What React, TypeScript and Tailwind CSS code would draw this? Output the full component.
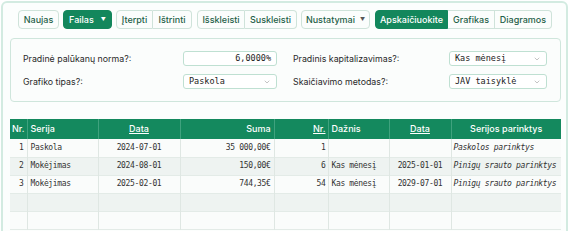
import { ChevronDown } from 'lucide-react'

const mono = { fontFamily: '"DejaVu Sans Mono", monospace' }

type Row = {
  nr: string
  serija: string
  data: string
  suma: string
  kiekis: string
  daznis: string
  data2: string
  parinktys: string
}

const rows: Row[] = [
  { nr: '1', serija: 'Paskola', data: '2024-07-01', suma: '35 000,00€', kiekis: '1', daznis: '', data2: '', parinktys: 'Paskolos parinktys' },
  { nr: '2', serija: 'Mokėjimas', data: '2024-08-01', suma: '150,00€', kiekis: '6', daznis: 'Kas mėnesį', data2: '2025-01-01', parinktys: 'Pinigų srauto parinktys' },
  { nr: '3', serija: 'Mokėjimas', data: '2025-02-01', suma: '744,35€', kiekis: '54', daznis: 'Kas mėnesį', data2: '2029-07-01', parinktys: 'Pinigų srauto parinktys' },
  { nr: '', serija: '', data: '', suma: '', kiekis: '', daznis: '', data2: '', parinktys: '' },
  { nr: '', serija: '', data: '', suma: '', kiekis: '', daznis: '', data2: '', parinktys: '' },
]

function Btn({ children, green, className = '' }: { children: React.ReactNode; green?: boolean; className?: string }) {
  return (
    <div
      className={`h-[19px] flex items-center justify-center text-[9px] font-medium whitespace-nowrap ${
        green ? 'bg-[#13875c] text-white border border-[#13875c]' : 'bg-[#fbfdfc] text-[#1f5f48] border border-[#cfe3da]'
      } ${className}`}
    >
      {children}
    </div>
  )
}

function Field({ value, select, width, right }: { value: string; select?: boolean; width: string; right?: boolean }) {
  return (
    <div
      className={`${width} h-[15px] rounded-[3px] border border-[#bfe0d2] bg-white flex items-center px-[5px] text-[8.5px] text-[#222] ${right ? 'justify-end' : 'justify-between'}`}
      style={mono}
    >
      <span>{value}</span>
      {select && <ChevronDown size={8} className="text-[#888]" strokeWidth={1.5} />}
    </div>
  )
}

export default function App() {
  return (
    <div className="w-[570px] h-[231px] overflow-hidden bg-white" style={{ fontFamily: 'Inter, "Noto Sans", sans-serif' }}>
      <div className="ml-[1px] mt-[1px] w-[567px] h-[240px] rounded-tl-[6px] rounded-tr-[6px] border-[2px] border-[#d3ebe1] bg-[#fcfefd] pt-[7px] pl-[7px]">
        {/* Toolbar */}
        <div className="flex items-center pl-[8px]">
          <Btn className="w-[41px] rounded-[4px]">Naujas</Btn>
          <Btn green className="w-[49px] ml-[4px] rounded-[4px] gap-[7px]">
            Failas <span className="text-[5px]">▼</span>
          </Btn>
          <div className="flex ml-[4px]">
            <Btn className="w-[37px] rounded-l-[4px]">Įterpti</Btn>
            <Btn className="w-[39px] rounded-r-[4px] border-l-0">Ištrinti</Btn>
          </div>
          <div className="flex ml-[5px]">
            <Btn className="w-[48px] rounded-l-[4px]">Išskleisti</Btn>
            <Btn className="w-[52px] rounded-r-[4px] border-l-0">Suskleisti</Btn>
          </div>
          <Btn className="w-[69px] ml-[4px] rounded-[4px] gap-[5px]">
            Nustatymai <span className="text-[5px] text-[#555]">▼</span>
          </Btn>
          <div className="flex ml-[5px]">
            <Btn green className="w-[73px] rounded-l-[4px]">Apskaičiuokite</Btn>
            <Btn className="w-[47px] border-l-0">Grafikas</Btn>
            <Btn className="w-[57px] rounded-r-[4px] border-l-0">Diagramos</Btn>
          </div>
        </div>

        {/* Form panel */}
        <div className="mt-[9px] w-[551px] h-[64px] rounded-[4px] border border-[#cfe6dc] bg-[#fbfdfc] pt-[12px] pl-[12px] text-[8.8px] text-[#2a2a2a]">
          <div className="grid grid-cols-[160px_94px_16px_156px_98px] gap-y-[8px] items-center">
            <span>Pradinė palūkanų norma?:</span>
            <Field value="6,0000%" width="w-[94px]" right />
            <span />
            <span>Pradinis kapitalizavimas?:</span>
            <Field value="Kas mėnesį" width="w-[98px]" select />
            <span>Grafiko tipas?:</span>
            <Field value="Paskola" width="w-[94px]" select />
            <span />
            <span>Skaičiavimo metodas?:</span>
            <Field value="JAV taisyklė" width="w-[98px]" select />
          </div>
        </div>

        {/* Table */}
        <table className="mt-[17px] w-[551px] border-collapse table-fixed">
          <colgroup>
            <col className="w-[17px]" />
            <col className="w-[71px]" />
            <col className="w-[82px]" />
            <col className="w-[94px]" />
            <col className="w-[54px]" />
            <col className="w-[61px]" />
            <col className="w-[62px]" />
            <col className="w-[110px]" />
          </colgroup>
          <thead>
            <tr className="h-[20px] bg-[#14895e] text-white text-[9px]">
              <th className="px-[2px] text-left font-medium border-r border-[#3fa27e]">Nr.</th>
              <th className="px-[3px] text-left font-medium border-r border-[#3fa27e]">Serija</th>
              <th className="text-center font-medium border-r border-[#3fa27e] underline">Data</th>
              <th className="px-[3px] text-right font-medium border-r border-[#3fa27e]">Suma</th>
              <th className="px-[2px] text-right font-medium border-r border-[#3fa27e] underline">Nr.</th>
              <th className="px-[3px] text-left font-medium border-r border-[#3fa27e]">Dažnis</th>
              <th className="text-center font-medium border-r border-[#3fa27e] underline">Data</th>
              <th className="text-center font-medium">Serijos parinktys</th>
            </tr>
          </thead>
          <tbody className="text-[8px] tracking-[-0.35px] text-[#333]" style={mono}>
            {rows.map((r, i) => (
              <tr key={i} className={`h-[18px] border-b border-[#e3ebe7] ${i % 2 === 0 ? 'bg-[#fafcfb]' : 'bg-[#eef3f1]'}`}>
                <td className="px-[3px] text-right border-r border-[#dfe7e3]">{r.nr}</td>
                <td className="px-[3px] border-r border-[#dfe7e3]">{r.serija}</td>
                <td className="text-center border-r border-[#dfe7e3]">{r.data}</td>
                <td className="px-[3px] text-right border-r border-[#dfe7e3]">{r.suma}</td>
                <td className="px-[2px] text-right border-r border-[#dfe7e3]">{r.kiekis}</td>
                <td className="px-[3px] whitespace-nowrap border-r border-[#dfe7e3]">{r.daznis}</td>
                <td className="text-center border-r border-[#dfe7e3]">{r.data2}</td>
                <td className="px-[2px] italic whitespace-nowrap overflow-hidden">{r.parinktys}</td>
              </tr>
            ))}
          </tbody>
        </table>
      </div>
    </div>
  )
}
